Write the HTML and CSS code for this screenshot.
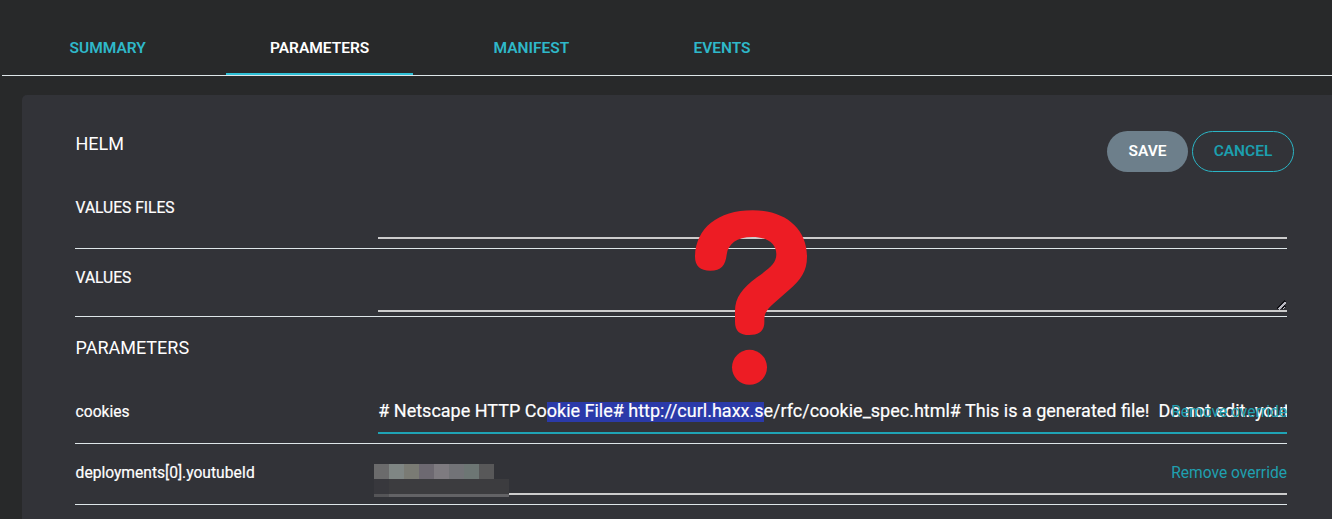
FILE: index.html
```html
<!DOCTYPE html>
<html lang="en">
<head>
<meta charset="utf-8">
<title>Parameters</title>
<link rel="stylesheet" href="styles.css">
</head>
<body>
<nav class="tabs">
  <a class="tab">SUMMARY</a>
  <a class="tab tab-active">PARAMETERS</a>
  <a class="tab">MANIFEST</a>
  <a class="tab">EVENTS</a>
</nav>
<main class="panel">
  <header class="panel-head">
    <h1 class="title">HELM</h1>
    <div class="actions">
      <button class="btn btn-save">SAVE</button>
      <button class="btn btn-cancel">CANCEL</button>
    </div>
  </header>
  <section class="row row-files">
    <div class="label">VALUES FILES</div>
    <div class="field"></div>
  </section>
  <section class="row row-values">
    <div class="label">VALUES</div>
    <div class="field">
      <svg class="grip" width="10" height="10" viewBox="0 0 10 10" shape-rendering="crispEdges">
        <path d="M1 9L9 1M6 9L9 6" stroke="#111116" stroke-width="2"/>
        <path d="M2.500 9.500L9.500 2.500" stroke="#b9b9c2" stroke-width="1.600"/>
        <path d="M7 8h1v1h-1zM8 7h1v1h-1z" fill="#b9b9c2"/>
      </svg>
    </div>
  </section>
  <h2 class="title subtitle">PARAMETERS</h2>
  <section class="row row-param">
    <div class="label">cookies</div>
    <div class="field field-focus">
      <span class="value"># Netscape HTTP Co<span class="selected">okie File# http://curl.haxx.s</span>e/rfc/cookie_spec.html# This is a generated file!&nbsp; Do not edit..yout</span>
      <a class="remove">Remove override</a>
    </div>
  </section>
  <section class="row row-param">
    <div class="label">deployments[0].youtubeId</div>
    <div class="field">
      <svg class="mosaic" width="135" height="33" viewBox="0 0 135 33" shape-rendering="crispEdges">
        <path fill="#6b6b6c" d="M0 0h15v15H0z"/>
        <path fill="#7f8684" d="M15 0h15v15H15z"/>
        <path fill="#7a7b74" d="M30 0h15v15H30z"/>
        <path fill="#6d6971" d="M45 0h15v15H45z"/>
        <path fill="#7e7b80" d="M60 0h15v15H60z"/>
        <path fill="#727377" d="M75 0h15v15H75z"/>
        <path fill="#6d7674" d="M90 0h15v15H90z"/>
        <path fill="#585859" d="M105 0h15v15H105z"/>
        <path fill="#38383d" d="M0 15h15v15H0z"/>
        <path fill="#3c3c3f" d="M15 15h120v15H15z"/>
        <path fill="#555558" d="M0 30h15v3H0z"/>
        <path fill="#636366" d="M15 30h120v3H15z"/>
      </svg>
      <a class="remove">Remove override</a>
    </div>
  </section>
</main>
<svg class="question" width="140" height="195" viewBox="0 0 420 585">
  <path fill="#ed1c24" d="M45 170C47 86 112 31 218 31C316 31 381 86 381 170C381 214 362 239 326 271L280 311C259 330 253 341 253 360V367C253 393 237 405 208 405C179 405 165 393 165 365V334C165 292 187 265 231 232C269 204 289 190 289 163C289 132 263 111 217 111C170 111 144 132 140 164C136 196 124 212 91 212C61 212 45 197 45 170Z"/>
  <circle cx="208.500" cy="502" r="52.500" fill="#ed1c24"/>
</svg>
</body>
</html>
```
FILE: styles.css
```css
* { box-sizing: border-box; }
body {
  margin: 0;
  height: 519px;
  overflow: hidden;
  position: relative;
  background: #28292a;
  color: #fff;
  font-family: Roboto, sans-serif;
}
.tabs {
  display: flex;
  gap: 37.2px;
  height: 76px;
  margin-left: 2px;
  padding-left: 24px;
  border-bottom: 1px solid #dee6e9;
}
.tab {
  display: flex;
  padding: 38px 43.5px 0;
  font-size: 15.5px;
  line-height: 20px;
  font-weight: 600;
  color: #2fb8c9;
}
.tab-active {
  color: #fff;
  border-bottom: 2px solid #2fc0d6;
}
.panel {
  margin: 19px 0 0 22px;
  height: 424px;
  padding: 0 45px 0 53px;
  background: #323338;
  border-radius: 5px 0 0 0;
}
.panel-head {
  display: flex;
  justify-content: space-between;
  height: 83px;
  margin-right: -7px;
}
.title {
  margin: 0;
  padding: 38px 0 0 0.5px;
  font-size: 18px;
  line-height: 22px;
  font-weight: 400;
}
.actions {
  display: flex;
  gap: 4px;
  padding-top: 36px;
}
.btn {
  height: 41px;
  padding: 0 0 2px;
  border: 0;
  border-radius: 21px;
  font: 600 15.5px/20px Roboto, sans-serif;
}
.btn-save { width: 81px; background: #6d7f8b; color: #fff; }
.btn-cancel {
  width: 102px;
  background: transparent;
  border: 1px solid #2bb5c5;
  color: #1c9fae;
}
.row {
  display: grid;
  grid-template-columns: 303px minmax(0, 1fr);
  border-bottom: 1px solid #dee6e9;
}
.label {
  padding-left: 0.6px;
  font-size: 15.6px;
  line-height: 20px;
}
.label, .value { -webkit-text-stroke: 0.2px currentColor; }
.field {
  position: relative;
  border-bottom: 2px solid #ccc;
}
.row-files { height: 71px; padding-bottom: 9px; }
.row-files .label { padding-top: 20px; }
.row-values { height: 68px; padding-bottom: 4px; }
.row-values .label { padding-top: 19px; }
.subtitle { height: 66px; padding-top: 20px; }
.row-param { height: 61px; padding-bottom: 9px; }
.row-param .label { padding-top: 19px; }
.field-focus { border-color: #1fa3b5; }
.value {
  display: block;
  padding: 17px 0 0 0.3px;
  font-size: 18px;
  line-height: 22px;
  white-space: nowrap;
  overflow: hidden;
}
.selected {
  padding-bottom: 1px;
  background: linear-gradient(#2b3aa9, #2b3aa9) 0 2px no-repeat;
}
.remove {
  position: absolute;
  right: 0;
  top: 19px;
  font-size: 15.6px;
  line-height: 20px;
  color: #1fa0b0;
}
.grip { position: absolute; right: 1px; bottom: 0; }
.mosaic { position: absolute; left: -4px; top: 20px; }
.question { position: absolute; left: 680px; top: 200px; }
```
